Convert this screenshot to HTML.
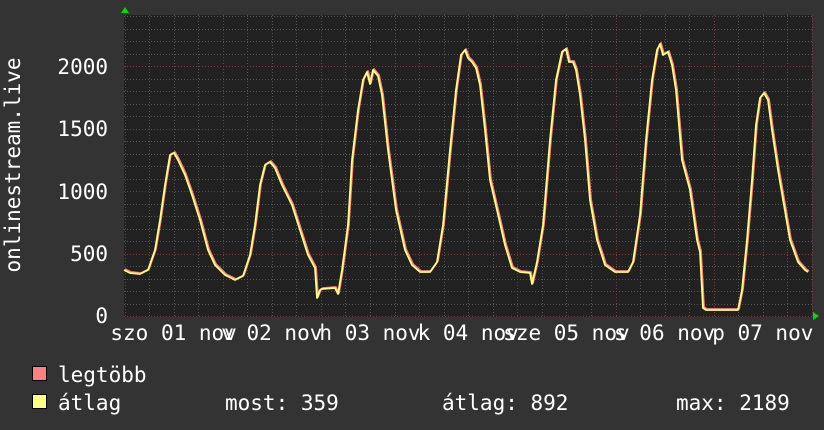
<!DOCTYPE html>
<html><head><meta charset="utf-8"><style>
html,body{margin:0;padding:0;background:#333;}
svg{display:block}
text{font-family:"DejaVu Sans Mono","Liberation Mono",monospace;fill:#fff;font-size:21px}
</style></head><body>
<svg width="824" height="430" viewBox="0 0 824 430" xmlns="http://www.w3.org/2000/svg">
<rect width="824" height="430" fill="#333"/>
<rect x="124" y="15" width="688" height="302" fill="#212121"/>
<g id="grid"></g>
<path id="pmax" fill="none" stroke="#ff8080" stroke-width="1.8" stroke-linejoin="round"/>
<path id="pavg" fill="none" stroke="#ffff80" stroke-width="1.8" stroke-linejoin="round"/>
<polygon points="121,13 125,7 129,13" fill="#00dd00"/>
<polygon points="813,312 819,316 813,320" fill="#00dd00"/>
<g text-anchor="end">
<text x="108" y="74">2000</text>
<text x="108" y="136">1500</text>
<text x="108" y="199">1000</text>
<text x="108" y="261">500</text>
<text x="108" y="323">0</text>
</g>
<text transform="translate(20,165) rotate(-90)" text-anchor="middle">onlinestream.live</text>
<g id="xl" text-anchor="middle"></g>
<rect x="32.5" y="366.5" width="14" height="14" fill="#ff8080" stroke="#000"/>
<rect x="32.5" y="394.5" width="14" height="14" fill="#ffff80" stroke="#000"/>
<text x="58" y="382">legtöbb</text>
<text x="58" y="410">átlag</text>
<text x="225" y="410">most: 359</text>
<text x="442" y="410">átlag: 892</text>
<text x="676" y="410">max: 2189</text>
</svg>
<script>
var ns="http://www.w3.org/2000/svg",g=document.getElementById('grid');
function ln(x1,y1,x2,y2,c){var l=document.createElementNS(ns,'line');l.setAttribute('x1',x1);l.setAttribute('y1',y1);l.setAttribute('x2',x2);l.setAttribute('y2',y2);l.setAttribute('stroke',c);l.setAttribute('stroke-width',1);l.setAttribute('stroke-dasharray','1,2');g.appendChild(l);}
for(var i=0;i<=28;i++){var x=Math.round(124.5+i*24.55)+0.5;ln(x,15,x,317,i%4==0?'#7a3a3a':'#555');}
for(var j=0;j<=24;j++){var y=Math.round(316-j*12.5)+0.5;if(y<15)break;ln(124,y,812,y,j%5==0?'#7a3a3a':'#555');}
var labs=["szo 01 nov","v 02 nov","h 03 nov","k 04 nov","sze 05 nov","s 06 nov","p 07 nov"],xl=document.getElementById('xl');
labs.forEach(function(s,i){var t=document.createElementNS(ns,'text');t.setAttribute('x',173.6+i*98.2);t.setAttribute('y',340);t.textContent=s;xl.appendChild(t);});
var pts=[124,270,130,273,140,274,148,270,155,250,160,220,165,185,170,155,174,153,178,160,185,175,192,195,200,220,208,250,215,265,225,275,235,280,243,276,250,255,255,225,260,185,265,165,270,162,275,168,282,185,292,205,300,230,308,255,315,268,317,298,320,290,322,289,335,288,338,294,342,270,348,225,352,160,358,110,363,80,367,72,370,84,373,70,378,76,382,95,388,150,396,210,405,250,412,265,420,272,430,272,437,262,443,225,450,150,456,90,461,55,465,50,468,58,472,62,476,68,480,85,485,130,490,180,497,210,505,245,512,268,520,272,530,273,532,284,537,262,543,225,550,140,556,80,562,52,566,49,569,62,573,62,576,70,580,95,585,140,590,200,597,240,605,265,615,272,628,272,633,262,640,215,646,140,652,80,657,50,660,44,663,55,668,52,672,65,676,90,682,160,690,190,697,240,700,252,703,308,706,310,738,310,742,290,747,240,752,180,756,125,760,98,764,93,768,100,772,130,778,170,784,205,790,240,798,262,805,270,808,272];
function mk(dx,dy){var d='';for(var k=0;k<pts.length;k+=2)d+=(k?'L':'M')+(pts[k]+dx)+','+(pts[k+1]+dy);return d;}
document.getElementById('pmax').setAttribute('d',mk(1,-1));
document.getElementById('pavg').setAttribute('d',mk(0,0));
</script>
</body></html>
